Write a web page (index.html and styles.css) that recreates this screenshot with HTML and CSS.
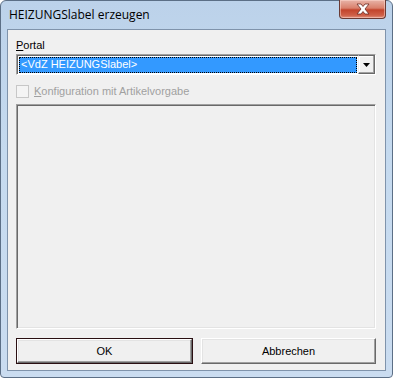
FILE: index.html
```html
<!DOCTYPE html>
<html>
<head>
<meta charset="utf-8">
<link rel="stylesheet" href="styles.css">
</head>
<body>
<div class="window">
  <div class="titlebar">
    <div class="title">HEIZUNGSlabel erzeugen</div>
    <div class="close">
      <svg width="16" height="12" viewBox="0 0 16 12"><path d="M2 1h4l2 2.5 2-2.5h4l-4 5 4 5h-4l-2-2.5-2 2.5h-4l4-5z" fill="#fff" stroke="#6a2a22" stroke-width="0.8"/></svg>
    </div>
  </div>
  <div class="client">
    <div class="label"><u>P</u>ortal</div>
    <div class="combo">
      <div class="combo-field"><span class="combo-text">&lt;VdZ HEIZUNGSlabel&gt;</span></div>
      <div class="combo-btn"><svg width="7" height="4" viewBox="0 0 7 4"><path d="M0 0h7l-3.5 4z" fill="#000"/></svg></div>
    </div>
    <div class="check-row">
      <span class="checkbox"></span>
      <span class="check-label"><u>K</u>onfiguration mit Artikelvorgabe</span>
    </div>
    <div class="panel"></div>
    <div class="buttons">
      <div class="btn default"><div class="btn-in">OK</div></div>
      <div class="btn"><div class="btn-in">Abbrechen</div></div>
    </div>
  </div>
</div>
</body>
</html>
```

FILE: styles.css
```css
html, body {
  margin: 0;
  padding: 0;
  background: #ffffff;
}
.window {
  width: 393px;
  height: 378px;
  box-sizing: border-box;
  border: 1px solid #5c6f86;
  border-radius: 6px 6px 4px 4px;
  background: linear-gradient(to bottom, #bcd2ea 0%, #c5daef 40%, #cadcf0 100%);
  display: flex;
  flex-direction: column;
  font-family: Tahoma, "DejaVu Sans", "Liberation Sans", sans-serif;
}
.titlebar {
  height: 28px;
  display: flex;
  justify-content: space-between;
  align-items: flex-start;
  flex-shrink: 0;
}
.title {
  font-family: "Open Sans", "Noto Sans", sans-serif;
  font-size: 12px;
  color: #000;
  padding: 6px 0 0 8px;
  line-height: 16px;
}
.close {
  width: 45px;
  height: 18px;
  margin-right: 6px;
  margin-top: -1px;
  border: 1px solid #6a3a34;
  border-top: none;
  border-radius: 0 0 4px 4px;
  background: linear-gradient(to bottom, #e8b4a8 0%, #d9806c 45%, #c2442c 55%, #cf6048 85%, #e09280 100%);
  display: flex;
  align-items: center;
  justify-content: center;
  box-shadow: inset 0 0 0 1px rgba(255,220,210,0.5);
}
.client {
  flex: 1;
  margin: 0 6px 6px 6px;
  border: 1px solid #7f93ab;
  background: #f0f0f0;
  padding: 6px 9px 0 8px;
  display: flex;
  flex-direction: column;
  font-family: "Liberation Sans", Arial, sans-serif;
  font-size: 11px;
}
.label {
  height: 14px;
  line-height: 14px;
  margin-top: 2px;
  color: #000;
}
.label u, .check-label u {
  text-decoration: underline;
  text-underline-offset: 1px;
}
.combo {
  margin-top: 2px;
  height: 21px;
  box-sizing: border-box;
  border-top: 1px solid #a0a0a0;
  border-left: 1px solid #a0a0a0;
  border-right: 1px solid #ffffff;
  border-bottom: 1px solid #ffffff;
  display: flex;
}
.combo-inner { display: none; }
.combo-field {
  flex: 1;
  border-top: 1px solid #696969;
  border-left: 1px solid #696969;
  background: #fff;
  padding: 1px;
  display: flex;
}
.combo-field .combo-text {
  flex: 1;
  background: #3399ff;
  color: #fff;
  outline: 1px dotted #000;
  outline-offset: -1px;
  line-height: 15px;
  padding-left: 2px;
}
.combo-btn {
  width: 17px;
  box-sizing: border-box;
  border-top: 1px solid #f0f0f0;
  border-left: 1px solid #f0f0f0;
  border-right: 1px solid #696969;
  border-bottom: 1px solid #696969;
  box-shadow: inset -1px -1px 0 #a0a0a0, inset 1px 1px 0 #fff;
  background: #f0f0f0;
  display: flex;
  align-items: center;
  justify-content: center;
  border-top-color: #696969;
}
.check-row {
  margin-top: 9px;
  height: 14px;
  display: flex;
  align-items: center;
  gap: 5px;
}
.checkbox {
  width: 13px;
  height: 13px;
  box-sizing: border-box;
  border: 1px solid #c7c7c7;
  background: #f4f4f4;
}
.check-label {
  color: #a0a0a0;
  line-height: 14px;
}
.panel {
  margin-top: 6px;
  height: 225px;
  box-sizing: border-box;
  border-top: 1px solid #a0a0a0;
  border-left: 1px solid #a0a0a0;
  border-right: 1px solid #ffffff;
  border-bottom: 1px solid #ffffff;
  box-shadow: inset 1px 1px 0 #696969, inset -1px -1px 0 #e3e3e3;
  background: #f0f0f0;
}
.buttons {
  margin-top: 9px;
  display: flex;
  gap: 8px;
}
.btn {
  flex: 1;
  height: 26px;
  box-sizing: border-box;
  display: flex;
}
.btn-in {
  flex: 1;
  box-sizing: border-box;
  border-top: 1px solid #ffffff;
  border-left: 1px solid #ffffff;
  border-right: 1px solid #696969;
  border-bottom: 1px solid #696969;
  box-shadow: inset -1px -1px 0 #a0a0a0, inset 1px 1px 0 #e3e3e3;
  background: #f0f0f0;
  display: flex;
  align-items: center;
  justify-content: center;
  color: #000;
}
.btn.default {
  border: 1px solid #2a0f12;
}
```
